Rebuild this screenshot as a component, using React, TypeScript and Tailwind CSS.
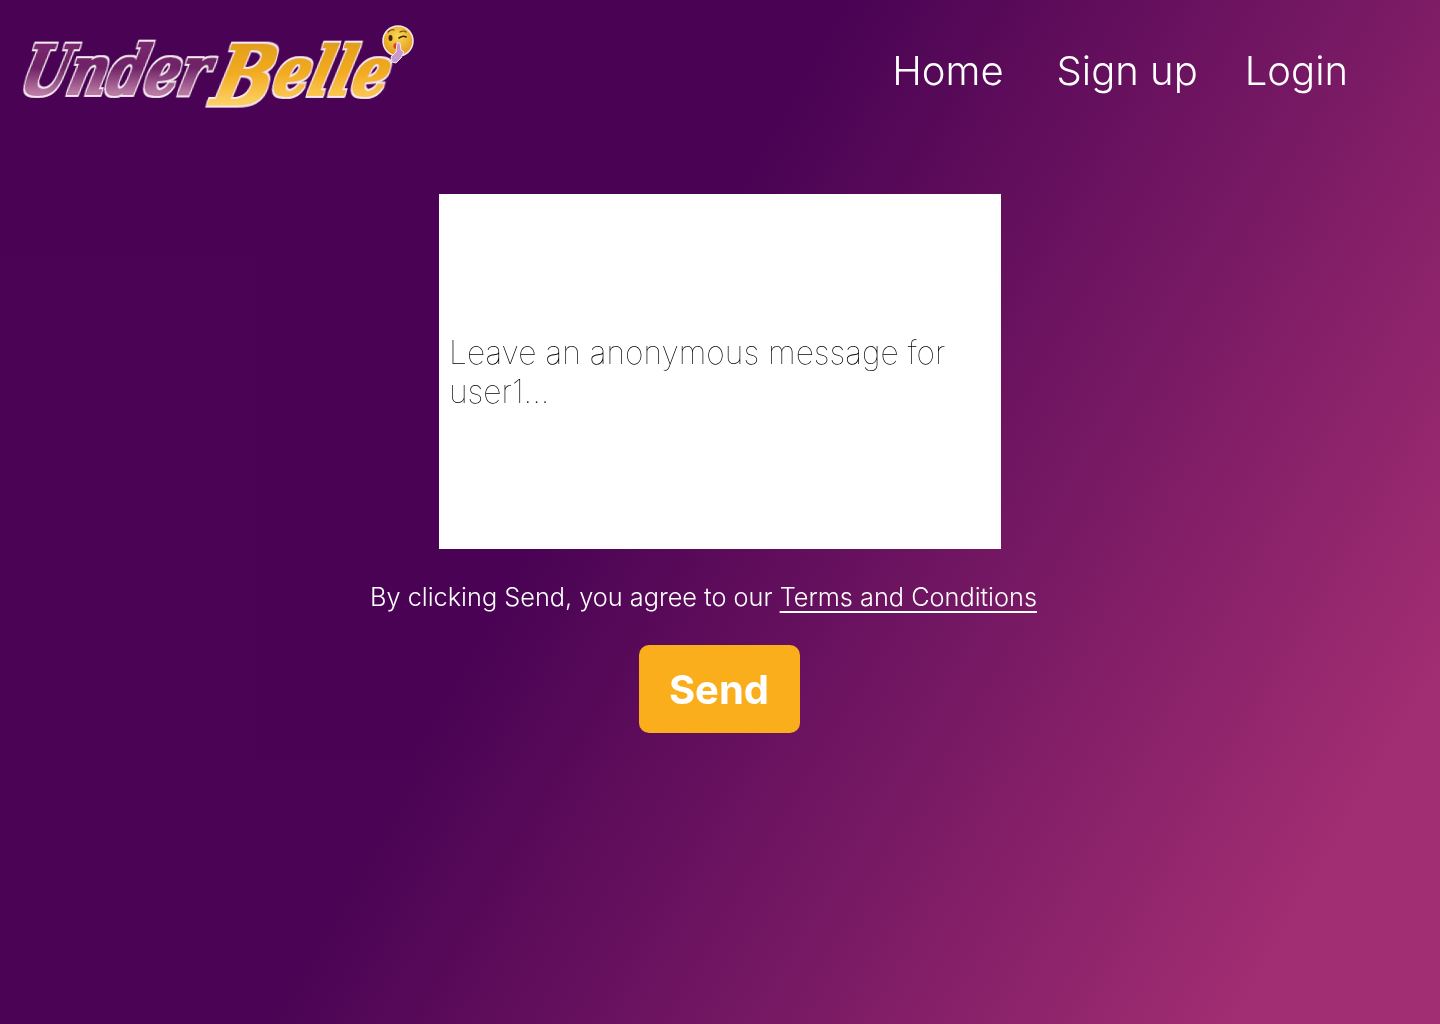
import { useState } from "react";

function Logo() {
  return (
    <svg width="400" height="92" viewBox="0 0 400 92" className="block overflow-visible">
      <defs>
        <linearGradient id="under" gradientUnits="userSpaceOnUse" x1="0" y1="-42" x2="0" y2="2">
          <stop offset="0" stopColor="#7b2a70" />
          <stop offset="0.55" stopColor="#6f1f66" />
          <stop offset="1" stopColor="#c184ab" />
        </linearGradient>
        <linearGradient id="belle" gradientUnits="userSpaceOnUse" x1="0" y1="-42" x2="0" y2="8">
          <stop offset="0" stopColor="#dc9a1a" />
          <stop offset="0.55" stopColor="#f2ab20" />
          <stop offset="1" stopColor="#fdd268" />
        </linearGradient>
        <radialGradient id="face" cx="0.5" cy="0.35" r="0.7">
          <stop offset="0" stopColor="#fbd85a" />
          <stop offset="1" stopColor="#e0920f" />
        </radialGradient>
        {/* fattens the letters and puts a thin white edge round them */}
        <filter id="brush" x="-10%" y="-30%" width="120%" height="160%">
          <feMorphology in="SourceGraphic" operator="dilate" radius="1" result="fat" />
          <feMorphology in="SourceAlpha" operator="dilate" radius="1.9" result="edge" />
          <feFlood floodColor="#f6e9f1" />
          <feComposite in2="edge" operator="in" result="white" />
          <feMerge>
            <feMergeNode in="white" />
            <feMergeNode in="fat" />
          </feMerge>
        </filter>
      </defs>
      <g transform="translate(-2 71) skewX(-14) scale(1 1.45)">
        <text
          x="0"
          y="0"
          textLength="186"
          lengthAdjust="spacingAndGlyphs"
          fontFamily="'DejaVu Serif', serif"
          fontStyle="italic"
          fontWeight="700"
          fontSize="46"
          fill="url(#under)"
          filter="url(#brush)"
        >
          Under
        </text>
      </g>
      <g transform="translate(192 72) skewX(-14) scale(1 1.45)">
        <text
          x="0"
          y="0"
          textLength="173"
          lengthAdjust="spacingAndGlyphs"
          fontFamily="'DejaVu Serif', serif"
          fontStyle="italic"
          fontWeight="700"
          fontSize="46"
          fill="url(#belle)"
          filter="url(#brush)"
        >
          <tspan fontSize="56" dy="7">B</tspan>
          <tspan dy="-7">elle</tspan>
        </text>
      </g>
      {/* shushing emoji */}
      <circle cx="378" cy="18" r="15" fill="url(#face)" stroke="#f5e9f0" strokeWidth="1.5" />
      <ellipse cx="370.5" cy="15" rx="2" ry="3" fill="#3a2508" />
      <path d="M379 15q4-3 7-1" fill="none" stroke="#3a2508" strokeWidth="1.6" strokeLinecap="round" />
      <path d="M368 9q3-3 6-2M380 9q4-2 6 0" fill="none" stroke="#6b4310" strokeWidth="1.2" strokeLinecap="round" />
      <ellipse cx="376" cy="23" rx="2.6" ry="3" fill="#d8431f" />
      <path d="M372 39l-1-5 5-5 1-9 3 0 1 7 3 2-3 6-5 5z" fill="#c99ad0" stroke="#f5e9f0" strokeWidth="1" />
    </svg>
  );
}

function NavLink({ label, className = "" }: { label: string; className?: string }) {
  return (
    <a href="#" className={`text-[40px] leading-[48px] font-light text-white ${className}`}>
      {label}
    </a>
  );
}

export default function App() {
  const [message, setMessage] = useState("");

  return (
    <div className="min-h-screen bg-[linear-gradient(120deg,#4a0354_42%,#a12d72_90%)] font-['Inter',sans-serif] text-white antialiased opacity-[0.999]">
      <header className="flex items-center justify-between pt-[23px] pl-[20px] pr-[92px]">
        <Logo />
        <nav className="flex items-center gap-[47px] mt-[4px]">
          <NavLink label="Home" className="pr-[6px]" />
          <NavLink label="Sign up" />
          <NavLink label="Login" />
        </nav>
      </header>

      <main className="flex flex-col items-center pt-[79px]">
        <textarea
          value={message}
          onChange={(e) => setMessage(e.target.value)}
          placeholder="Leave an anonymous message for user1..."
          className="block w-[562px] h-[355px] resize-none bg-white px-[10px] pt-[139px] text-[31.85px] leading-[39px] font-thin text-black outline-none placeholder:text-black"
        />
        <p className="mt-[33px] mr-[33px] text-[25.3px] leading-[30px] font-light">
          By clicking Send, you agree to our{" "}
          <a href="#" className="underline decoration-[1.5px] underline-offset-[5px]">
            Terms and Conditions
          </a>
        </p>
        <button className="mt-[33px] mr-[2px] w-[161px] h-[88px] pt-[2px] rounded-[10px] bg-[#faae1c] text-[40px] font-bold text-white">
          Send
        </button>
      </main>
    </div>
  );
}
